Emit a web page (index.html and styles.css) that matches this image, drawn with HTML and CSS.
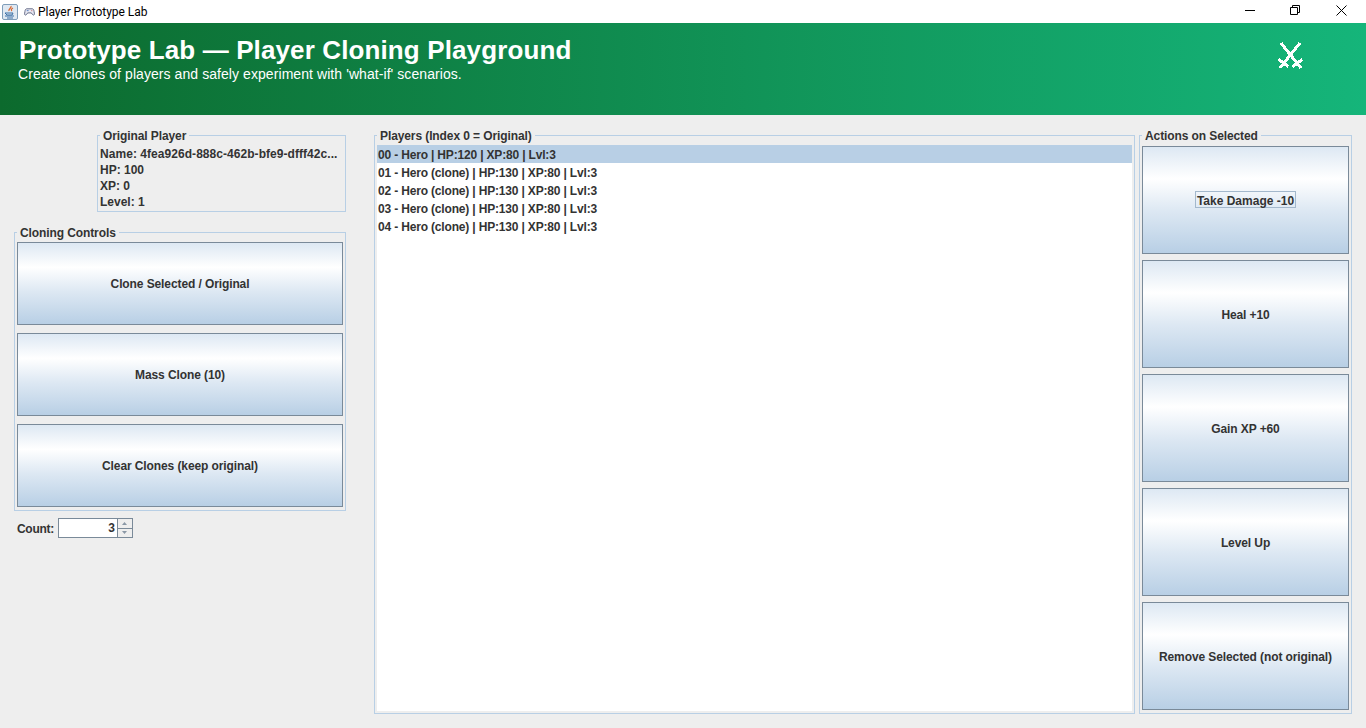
FILE: index.html
```html
<!DOCTYPE html>
<html lang="en">
<head>

    <meta charset="utf-8">

    <title>Player Prototype Lab</title>

    <link rel="stylesheet" href="styles.css">

</head>
<body>

    <div class="titlebar">
        <svg class="java_icon" width="16" height="16" viewBox="0 0 16 16">
            <rect x="0.5" y="0.5" width="15" height="15" rx="1.5" fill="#dfe8f2" stroke="#7f9db9"/>
            <path d="M9 2c1 2-3 3-2 5M11 4c-2 1-2 2-1 3" fill="none" stroke="#d8632a" stroke-width="1.2"/>
            <path d="M3 9h8l-1 2H5zM3 12h9M5 14h6" fill="none" stroke="#3a6ea5"/>
        </svg>
        <svg class="pad_icon" width="11" height="10" viewBox="0 0 12 10">
            <path d="M3 1.500h6c1.200 0 1.700 1 2 3l.4 2.500c.1 1.500-1.400 1.800-2.200.7L8 6H4L2.800 7.700c-.8 1.100-2.300.8-2.200-.7L1 4.500c.3-2 .8-3 2-3z" fill="#e8e8f2" stroke="#5c6480"/>
            <path d="M3 3.500h2" stroke="#4a78c0" fill="none"/>
            <path d="M8 3.500h1" stroke="#c05a5a" fill="none"/>
        </svg>
        <span class="titlebar_text">Player Prototype Lab</span>
        <div class="win_buttons">
            <svg width="12" height="13" viewBox="0 0 12 13"><path d="M0 5.500h10" stroke="#000" fill="none"/></svg>
            <svg width="12" height="13" viewBox="0 0 12 13"><path d="M.5 2.500h7v7h-7zM2.500 2.500v-2h7v7h-2" stroke="#000" fill="none"/></svg>
            <svg width="12" height="13" viewBox="0 0 12 13"><path d="M1.500 .5l10 10M11.500 .5l-10 10" stroke="#000" fill="none"/></svg>
        </div>
    </div>

    <div class="banner">
        <div>
            <h1 class="banner_title">Prototype Lab — Player Cloning Playground</h1>
            <p class="banner_sub">Create clones of players and safely experiment with 'what-if' scenarios.</p>
        </div>
        <svg class="swords" width="30" height="32" viewBox="0 0 30 32" shape-rendering="crispEdges">
            <path d="M5 3L25 28M24 3L4 28" stroke="#fff" stroke-width="3" fill="none"/>
            <path d="M2.500 19.500L12.500 26.500M26.500 19.500L16.500 26.500" stroke="#fff" stroke-width="3" fill="none"/>
        </svg>
    </div>

    <div class="content">

        <div class="left_col">

            <fieldset class="group original">
                <legend>Original Player</legend>
                <div class="name_row">Name: 4fea926d-888c-462b-bfe9-dfff42c...</div>
                <div>HP: 100</div>
                <div>XP: 0</div>
                <div>Level: 1</div>
            </fieldset>

            <fieldset class="group cloning">
                <legend>Cloning Controls</legend>
                <button class="metal">Clone Selected / Original</button>
                <button class="metal">Mass Clone (10)</button>
                <button class="metal">Clear Clones (keep original)</button>
            </fieldset>

            <div class="count_row">
                <span class="count_label">Count:</span>
                <div class="spinner">
                    <div class="spinner_value">3</div>
                    <div class="spinner_arrows">
                        <div class="arrow"><svg width="5" height="3" viewBox="0 0 5 3"><path d="M2.500 0L5 3H0z" fill="#8a98a6"/></svg></div>
                        <div class="arrow"><svg width="5" height="3" viewBox="0 0 5 3"><path d="M0 0h5L2.500 3z" fill="#8a98a6"/></svg></div>
                    </div>
                </div>
            </div>

        </div>

        <fieldset class="group players">
            <legend>Players (Index 0 = Original)</legend>
            <div class="list">
                <div class="list_row selected">00 - Hero | HP:120 | XP:80 | Lvl:3</div>
                <div class="list_row">01 - Hero (clone) | HP:130 | XP:80 | Lvl:3</div>
                <div class="list_row">02 - Hero (clone) | HP:130 | XP:80 | Lvl:3</div>
                <div class="list_row">03 - Hero (clone) | HP:130 | XP:80 | Lvl:3</div>
                <div class="list_row">04 - Hero (clone) | HP:130 | XP:80 | Lvl:3</div>
            </div>
        </fieldset>

        <fieldset class="group actions">
            <legend>Actions on Selected</legend>
            <button class="metal"><span class="focused">Take Damage -10</span></button>
            <button class="metal">Heal +10</button>
            <button class="metal">Gain XP +60</button>
            <button class="metal">Level Up</button>
            <button class="metal">Remove Selected (not original)</button>
        </fieldset>

    </div>

</body>
</html>
```

FILE: styles.css
```css
html, body {
    width: 100%;
    height: 100%;
    margin: 0;
    overflow: hidden;
}
body {
    display: flex;
    flex-direction: column;
    background: #eeeeee;
    color: #333333;
    font-family: "Liberation Sans", Arial, sans-serif;
    font-size: 12px;
    font-weight: bold;
}
/* window title */
.titlebar {
    display: flex;
    align-items: center;
    height: 23px;
    padding-left: 2px;
    background: #fff;
    color: #000;
    font-family: Roboto, sans-serif;
    font-size: 12px;
    font-weight: normal;
}
.java_icon {
    margin-right: 6px;
}
.pad_icon {
    margin-right: 3px;
}
.titlebar_text {
    letter-spacing: -0.05px;
}
.win_buttons {
    display: flex;
    gap: 33px;
    margin-left: auto;
    padding-right: 19px;
}
/* green header */
.banner {
    display: flex;
    justify-content: space-between;
    height: 92px;
    box-sizing: border-box;
    padding: 12px 60px 0 18px;
    background: linear-gradient(90deg, #0c6a2d, #15b57a);
    color: #fff;
}
.banner_title {
    margin: 0 0 0 1px;
    font-size: 26px;
    letter-spacing: 0.12px;
    line-height: 30px;
}
.banner_sub {
    margin: 1px 0 0;
    font-size: 14px;
    font-weight: normal;
    letter-spacing: 0.07px;
    line-height: 16px;
}
.swords {
    margin-top: 5px;
}
/* main area */
.content {
    display: flex;
    flex: 1;
    min-height: 0;
    padding: 14px;
}
.left_col {
    display: flex;
    flex-direction: column;
    width: 332px;
    margin-right: 28px;
}
.group {
    min-width: 0;
    margin: 0;
    padding: 3px 2px 2px;
    border: 1px solid #b8cfe5;
    box-sizing: border-box;
}
.group legend {
    height: 13px;
    padding: 0 3px;
    letter-spacing: -0.1px;
    line-height: 15px;
}
.original {
    align-self: flex-end;
    width: 249px;
    height: 83px;
    padding-top: 4px;
}
.original div {
    height: 16px;
    line-height: 16px;
}
.original .name_row {
    letter-spacing: 0.05px;
    white-space: nowrap;
}
.cloning {
    display: flex;
    flex-direction: column;
    gap: 8px;
    height: 285px;
    margin-top: 14px;
}
.cloning .metal {
    height: 83px;
    flex: none;
}
.metal {
    display: flex;
    align-items: center;
    justify-content: center;
    width: 100%;
    padding: 1px 0 0;
    border: 1px solid #7a8a99;
    background: linear-gradient(180deg, #dde8f3 0%, #ffffff 30%, #dde8f3 60%, #b8cfe5 100%);
    color: #333333;
    font: inherit;
    letter-spacing: -0.1px;
}
.focused {
    margin-bottom: 2px;
    padding: 4px 1px 0;
    border: 1px solid #a3b8cc;
    letter-spacing: 0;
    line-height: 11px;
}
.count_row {
    display: flex;
    align-items: center;
    gap: 4px;
    margin-top: 7px;
    margin-left: 3px;
}
.count_label {
    margin-top: 2px;
    letter-spacing: -0.3px;
}
.spinner {
    display: flex;
    width: 75px;
    height: 20px;
    box-sizing: border-box;
    border: 1px solid #7a8a99;
    background: #fff;
}
.spinner_value {
    width: 58px;
    padding-right: 2px;
    box-sizing: border-box;
    line-height: 19px;
    text-align: right;
}
.spinner_arrows {
    display: flex;
    flex-direction: column;
    width: 15px;
    box-sizing: border-box;
    border-left: 1px solid #7a8a99;
    background: #eeeeee;
}
.arrow {
    display: flex;
    flex: 1;
    align-items: center;
    justify-content: center;
}
.arrow + .arrow {
    border-top: 1px solid #7a8a99;
}
.players {
    display: flex;
    flex-direction: column;
    width: 761px;
    margin-right: 4px;
}
.list {
    flex: 1;
    background: #fff;
}
.list_row {
    height: 18px;
    padding-left: 1px;
    letter-spacing: -0.17px;
    line-height: 20px;
}
.selected {
    background: #b8cfe5;
}
.actions {
    display: flex;
    flex-direction: column;
    gap: 6px;
    width: 213px;
    padding-top: 4px;
}
.actions .metal {
    height: 108px;
    flex: none;
}
```
